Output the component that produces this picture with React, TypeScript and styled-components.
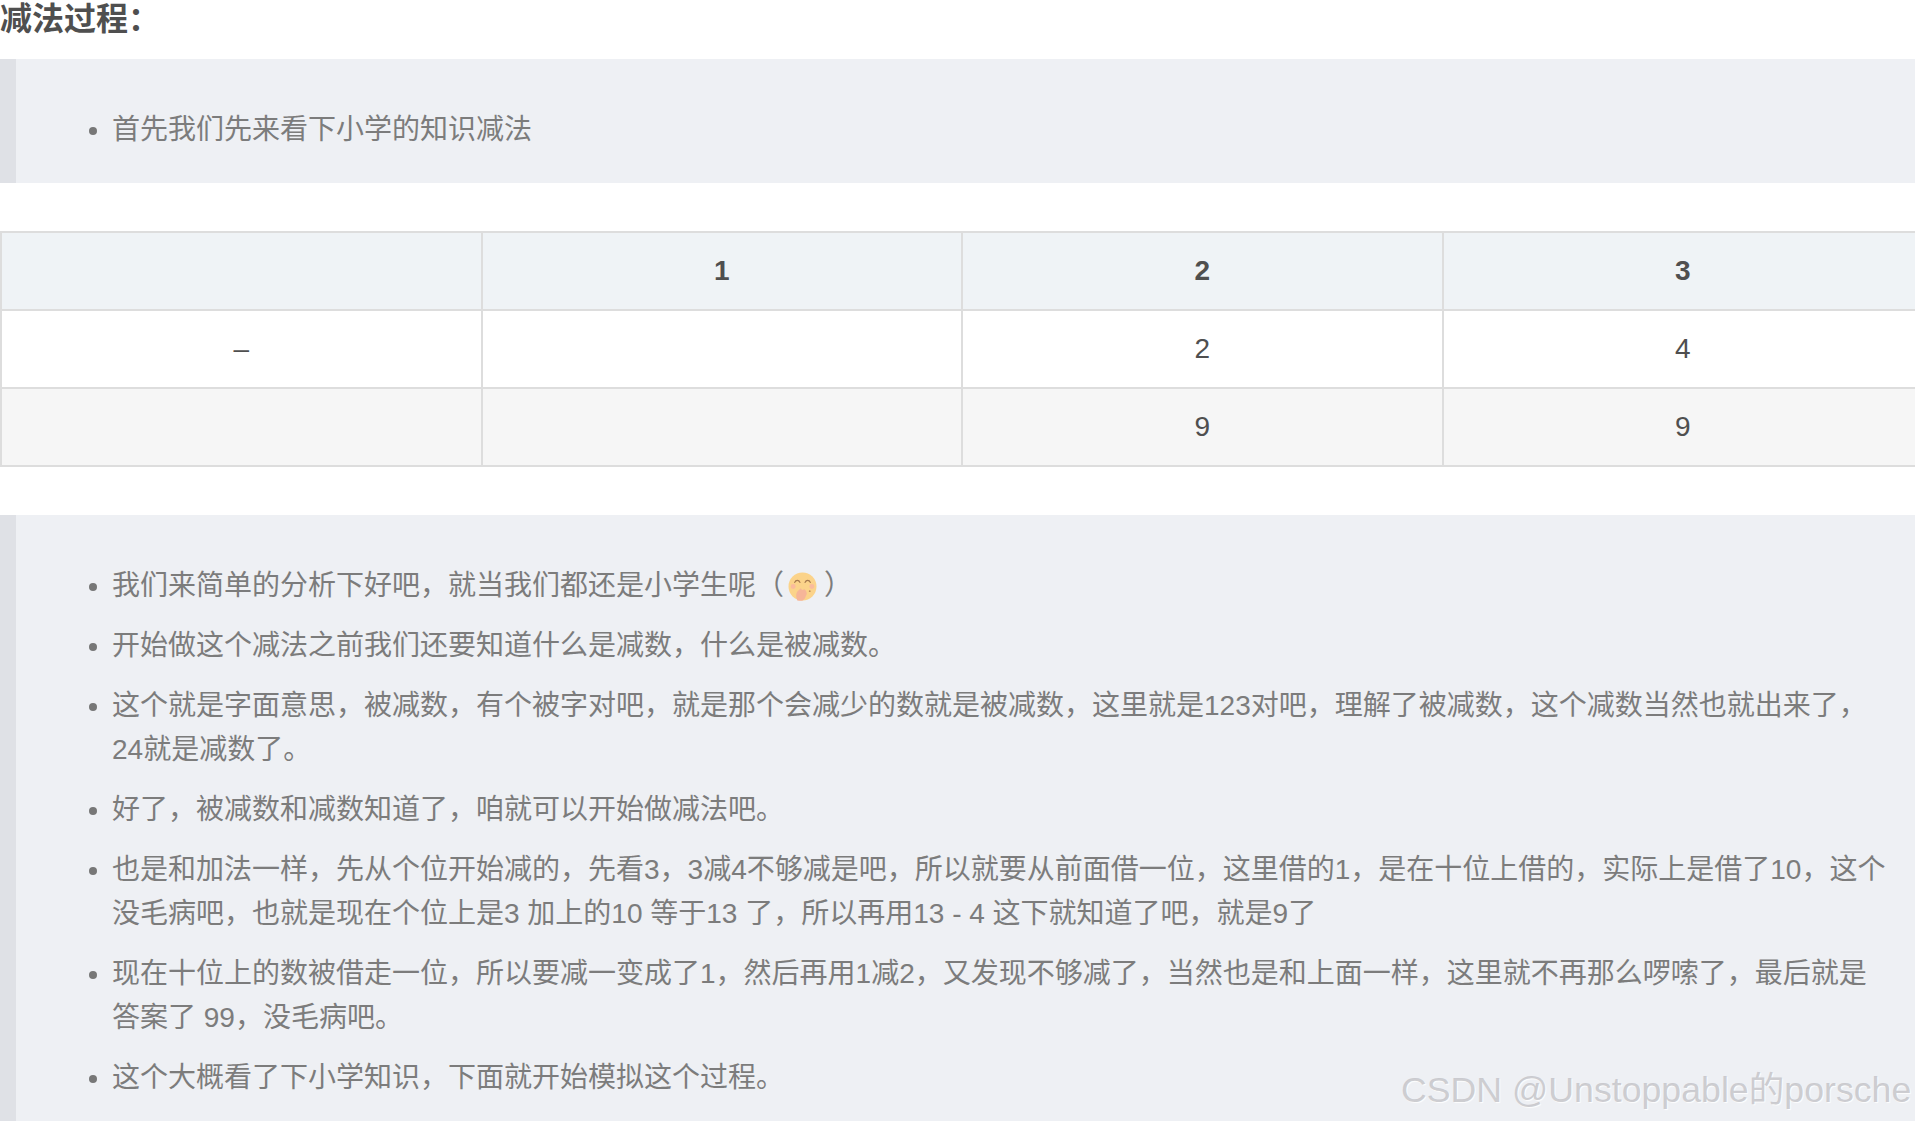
import React from 'react'
import styled, { createGlobalStyle } from 'styled-components'

const GlobalStyle = createGlobalStyle`
  html, body {
    margin: 0;
    padding: 0;
    background: #fff;
    overflow: hidden;
  }
`

const Page = styled.div`
  position: relative;
  width: 1915px;
  height: 1121px;
  overflow: hidden;
  font-family: 'Liberation Sans', 'Noto Sans CJK SC', sans-serif;
  font-size: 28px;
  color: #4f4f4f;
`

const Title = styled.h4`
  margin: 0 0 21px;
  height: 38px;
  font-size: 32px;
  line-height: 39px;
  font-weight: 700;
  color: #4f4f4f;
`

const Quote = styled.blockquote<{ $height: number }>`
  margin: 0;
  padding: 49px 28px 0 0;
  background: #eef0f4;
  border-left: 16px solid #dfe1e6;
  color: #7c7c7c;
  box-sizing: border-box;
  height: ${(p) => p.$height}px;
`

const List = styled.ul`
  margin: 0;
  padding: 0 0 0 96px;
  list-style: disc;
`

const Item = styled.li`
  line-height: 44px;
  margin-bottom: 16px;
  &::marker {
    color: #777;
  }
`

const Table = styled.div`
  display: grid;
  grid-template-columns: repeat(4, 480.5px);
  width: 1926px;
  margin: 48px 0;
  border-top: 2px solid #ddd;
  border-left: 2px solid #ddd;
`

const Cell = styled.div<{ $head?: boolean; $stripe?: boolean }>`
  display: flex;
  align-items: center;
  justify-content: center;
  height: 76px;
  border-right: 2px solid #ddd;
  border-bottom: 2px solid #ddd;
  background: ${(p) => (p.$head ? '#eff3f6' : p.$stripe ? '#f6f6f6' : '#fff')};
  font-weight: ${(p) => (p.$head ? 700 : 400)};
  color: #4f4f4f;
`

const Emoji = styled.svg`
  width: 29px;
  height: 29px;
  margin: 0 7px 0 4px;
  vertical-align: -6px;
`

const Watermark = styled.div`
  position: absolute;
  left: 1401px;
  top: 1068px;
  font-size: 35.7px;
  line-height: 44px;
  white-space: nowrap;
  color: rgba(190, 190, 195, 0.75);
  text-shadow: 1px 1px 1px rgba(255, 255, 255, 0.9);
`

const BlushEmoji = () => (
  <Emoji viewBox="0 0 28 28">
    <circle cx="14" cy="14" r="13.5" fill="#fbd38a" />
    <circle cx="5" cy="14" r="2.4" fill="#fabb9c" />
    <circle cx="23" cy="14" r="2.4" fill="#fabb9c" />
    <path d="M6.5 10c1-2.6 4-2.6 5 0M16.5 10c1-2.6 4-2.6 5 0" fill="none" stroke="#a67a4e" strokeWidth="1.2" strokeLinecap="round" />
    <circle cx="21" cy="18.5" r="0.9" fill="#c08f5c" />
    <path d="M9 27.4c-1.4-3-1.6-6.4 0-8.6l3.4-3.2 1.2 1.8 2.4-.8 1.6 2 .6 2.4-1.2 3c-.6 1.6-1.6 3-2.8 3.6-1.8.4-3.6.2-5.2-.2z" fill="#f6b598" />
  </Emoji>
)

const rows = [
  ['', '1', '2', '3'],
  ['–', '', '2', '4'],
  ['', '', '9', '9'],
]

const App = () => {
  return (
    <Page>
      <GlobalStyle />
      <Title>减法过程：</Title>
      <Quote $height={124}>
        <List>
          <Item>首先我们先来看下小学的知识减法</Item>
        </List>
      </Quote>
      <Table>
        {rows.map((row, r) =>
          row.map((text, c) => (
            <Cell key={`${r}-${c}`} $head={r === 0} $stripe={r === 2}>
              {text}
            </Cell>
          ))
        )}
      </Table>
      <Quote $height={620}>
        <List>
          <Item>
            我们来简单的分析下好吧，就当我们都还是小学生呢（<BlushEmoji />）
          </Item>
          <Item>开始做这个减法之前我们还要知道什么是减数，什么是被减数。</Item>
          <Item>
            这个就是字面意思，被减数，有个被字对吧，就是那个会减少的数就是被减数，这里就是123对吧，理解了被减数，这个减数当然也就出来了，24就是减数了。
          </Item>
          <Item>好了，被减数和减数知道了，咱就可以开始做减法吧。</Item>
          <Item>
            也是和加法一样，先从个位开始减的，先看3，3减4不够减是吧，所以就要从前面借一位，这里借的1，是在十位上借的，实际上是借了10，这个没毛病吧，也就是现在个位上是3 加上的10 等于13 了，所以再用13 - 4 这下就知道了吧，就是9了
          </Item>
          <Item>
            现在十位上的数被借走一位，所以要减一变成了1，然后再用1减2，又发现不够减了，当然也是和上面一样，这里就不再那么啰嗦了，最后就是答案了 99，没毛病吧。
          </Item>
          <Item>这个大概看了下小学知识，下面就开始模拟这个过程。</Item>
        </List>
      </Quote>
      <Watermark>CSDN @Unstoppable的porsche</Watermark>
    </Page>
  )
}

export default App
